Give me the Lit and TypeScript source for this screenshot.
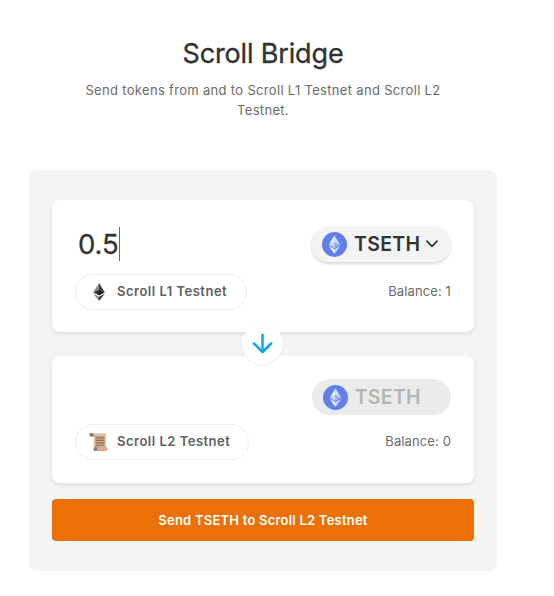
import { LitElement, html, css, svg } from "lit";
import { customElement, property } from "lit/decorators.js";

const diamond = svg`
  <circle cx="12.5" cy="12.5" r="12.5" fill="#627eea"></circle>
  <path d="M12.5 3.2 6.8 12.8l5.7-2.6z" fill="#fff" opacity=".9"></path>
  <path d="M12.5 3.2v7l5.7 2.6z" fill="#fff" opacity=".7"></path>
  <path d="M6.8 12.8l5.7 3.4v-6z" fill="#fff" opacity=".65"></path>
  <path d="M12.5 10.2v6l5.7-3.4z" fill="#fff" opacity=".35"></path>
  <path d="M6.8 13.9l5.7 8v-4.6z" fill="#fff" opacity=".95"></path>
  <path d="M12.5 17.3v4.6l5.7-8z" fill="#fff" opacity=".7"></path>`;

@customElement("token-pill")
class TokenPill extends LitElement {
  @property({ type: Boolean, reflect: true }) disabled = false;

  static styles = css`
    :host {
      display: flex;
      align-items: center;
      box-sizing: border-box;
      width: 140.5px;
      height: 36px;
      padding-left: 11.5px;
      border-radius: 18px;
      background: #f3f5f5;
      color: #333;
      box-shadow: 0 2px 3px rgba(0, 0, 0, 0.14);
    }
    :host([disabled]) {
      width: 139.5px;
      padding-left: 11.2px;
      background: #ebebeb;
      color: #b5b5b5;
      box-shadow: none;
    }
    .coin { width: 25px; height: 25px; flex: none; }
    .name {
      margin-left: 7px;
      width: 67px;
      font-size: 19.5px;
      font-weight: 600;
      line-height: 36px;
      letter-spacing: 0.3px;
      white-space: nowrap;
    }
    .chevron { width: 12px; height: 8px; margin-left: 5px; flex: none; }
  `;

  render() {
    return html`
      <svg class="coin" viewBox="0 0 25 25">${diamond}</svg>
      <span class="name">TSETH</span>
      ${this.disabled
        ? null
        : html`<svg class="chevron" viewBox="0 0 12 8">
            <path d="M1 1.2 6 6.4l5-5.2" fill="none" stroke="#333" stroke-width="1.7" stroke-linecap="round" stroke-linejoin="round"></path>
          </svg>`}
    `;
  }
}

@customElement("network-chip")
class NetworkChip extends LitElement {
  @property() layer = "L1";

  static styles = css`
    :host {
      display: flex;
      align-items: center;
      box-sizing: border-box;
      height: 36px;
      padding-left: 13px;
      border: 1px solid #ececec;
      border-radius: 18px;
      color: #606060;
    }
    .icon { width: 20px; height: 20px; flex: none; }
    .label {
      margin-left: 8px;
      padding-bottom: 2px;
      font-size: 13px;
      font-weight: 600;
      letter-spacing: 0.5px;
      white-space: nowrap;
    }
  `;

  render() {
    const icon =
      this.layer === "L1"
        ? svg`
          <path d="M10 1 4.2 10.3 10 7.8z" fill="#8c8c8c"></path>
          <path d="M10 1v6.8l5.8 2.5z" fill="#3c3c3b"></path>
          <path d="M4.2 10.3 10 13.6V7.8z" fill="#343434"></path>
          <path d="M10 7.8v5.8l5.8-3.3z" fill="#141414"></path>
          <path d="M4.2 11.4 10 19v-4.3z" fill="#8c8c8c"></path>
          <path d="M10 14.7V19l5.8-7.6z" fill="#3c3c3b"></path>`
        : svg`
          <path d="M2 1.2h14.5q1.2.1 1.2 1.2 0 1-1 1V16H4.8V4.5H2z" fill="#dcc3a6"></path>
          <path d="M5.8 3.8h10.7V16H5.8z" fill="#c9aa8b"></path>
          <path d="M1.9 1C-.2 1-.2 4.6 1.9 4.6h2.9V2.4C4.2 1.4 3.2 1 1.9 1z" fill="#987565"></path>
          <path d="M7 5.9h8M7 8.4h8M7 10.9h8M7 13.3h8" stroke="#947762" stroke-width="1.1"></path>
          <path d="M6.4 15.3h11.4q1 .1 1 1.8t-1.3 1.8H6z" fill="#d8ad94"></path>
          <path d="M6 15.3h2.2v3.6H6c-2.2-.1-2.2-3.5 0-3.6z" fill="#a17a66"></path>`;
    return html`
      <svg class="icon" viewBox="0 0 20 20">${icon}</svg>
      <span class="label">Scroll ${this.layer} Testnet</span>
    `;
  }
}

@customElement("app-root")
class AppRoot extends LitElement {
  static styles = css`
    :host {
      display: block;
      box-sizing: border-box;
      width: 554px;
      height: 596px;
      padding: 37px 57px 0 29px;
      background: #fff;
      font-family: Inter, "Liberation Sans", sans-serif;
      color: #333;
    }
    .title {
      margin: 0;
      text-align: center;
      font-size: 27px;
      font-weight: 400;
      line-height: 34px;
      letter-spacing: -0.15px;
      -webkit-text-stroke: 0.35px currentColor;
    }
    .subtitle {
      width: 370px;
      margin: 9px auto 0;
      text-align: center;
      font-size: 13px;
      line-height: 20px;
      letter-spacing: 0.32px;
      color: #6b6b6b;
    }
    .panel {
      box-sizing: border-box;
      height: 401px;
      margin-top: 50px;
      padding: 30px 23px;
      border-radius: 8px;
      background: #f3f5f5;
    }
    .card {
      box-sizing: border-box;
      height: 132px;
      padding: 26px 23px 0;
      border-radius: 8px;
      background: #fff;
      box-shadow: 0 2px 4px rgba(0, 0, 0, 0.1);
    }
    .card.to { height: 127px; padding-top: 23px; }
    .row { display: flex; justify-content: space-between; align-items: center; height: 36px; }
    .row + .row { margin-top: 11.5px; }
    .card.to .row + .row { margin-top: 8.5px; }
    .amount {
      display: flex;
      align-items: center;
      padding-left: 3px;
      font-size: 27.5px;
      line-height: 36px;
      letter-spacing: -0.1px;
      -webkit-text-stroke: 0.3px currentColor;
    }
    .caret { width: 1px; height: 34px; background: #666; }
    .chip1 { width: 172px; }
    .chip2 { width: 174px; }
    .balance { padding-bottom: 1px; font-size: 13px; letter-spacing: 0.12px; color: #6b6b6b; }
    .gap { display: flex; justify-content: center; align-items: center; height: 24px; }
    .swap {
      position: relative;
      z-index: 1;
      display: flex;
      flex: none;
      align-items: center;
      justify-content: center;
      width: 41px;
      height: 41px;
      margin: 0 1px 1px 0;
      border-radius: 50%;
      background: #fff;
      box-shadow: 0 1px 3px rgba(0, 0, 0, 0.08);
    }
    .arrow { width: 21px; height: 21px; }
    .send {
      display: block;
      width: 100%;
      height: 42px;
      margin-top: 16px;
      padding: 0;
      border: 0;
      border-radius: 4px;
      background: #eb7106;
      color: #fff;
      font: 600 13px/42px Inter, sans-serif;
      letter-spacing: 0.22px;
    }
  `;

  render() {
    return html`
      <h1 class="title">Scroll Bridge</h1>
      <p class="subtitle">Send tokens from and to Scroll L1 Testnet and Scroll L2 Testnet.</p>
      <main class="panel">
        <section class="card">
          <div class="row">
            <div class="amount">0.5<span class="caret"></span></div>
            <token-pill></token-pill>
          </div>
          <div class="row">
            <network-chip class="chip1" layer="L1"></network-chip>
            <span class="balance">Balance: 1</span>
          </div>
        </section>
        <div class="gap">
          <div class="swap">
            <svg class="arrow" viewBox="0 0 21 21">
              <path d="M10.5 1.8v17M1.9 10.5l8.6 8.5 8.6-8.5" fill="none" stroke="#12a5f4" stroke-width="2.5" stroke-linecap="round" stroke-linejoin="round"></path>
            </svg>
          </div>
        </div>
        <section class="card to">
          <div class="row">
            <span></span>
            <token-pill disabled></token-pill>
          </div>
          <div class="row">
            <network-chip class="chip2" layer="L2"></network-chip>
            <span class="balance">Balance: 0</span>
          </div>
        </section>
        <button class="send">Send TSETH to Scroll L2 Testnet</button>
      </main>
    `;
  }
}
